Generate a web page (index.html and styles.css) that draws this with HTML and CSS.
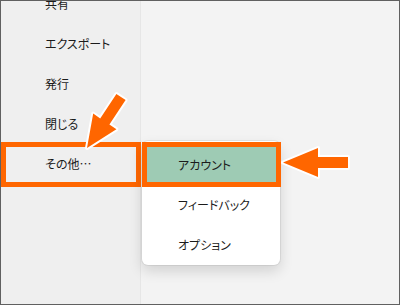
FILE: index.html
```html
<!DOCTYPE html>
<html lang="ja">
<head>
    <meta charset="UTF-8">
    <meta name="viewport" content="width=device-width, initial-scale=1.0">
    <title>その他メニュー</title>
    <link rel="stylesheet" href="styles.css">
</head>
<body>
    <div class="window">
        <div class="sidebar">
            <ul class="nav-list">
                <li class="nav-item">共有</li>
                <li class="nav-item">エクスポート</li>
                <li class="nav-item">発行</li>
                <li class="nav-item">閉じる</li>
                <li class="nav-item marked">その他…</li>
            </ul>
        </div>
        <div class="main"></div>

        <!-- flyout submenu -->
        <ul class="flyout">
            <li class="flyout-item active"><span>アカウント</span></li>
            <li class="flyout-item"><span>フィードバック</span></li>
            <li class="flyout-item"><span>オプション</span></li>
        </ul>

        <!-- callout arrows -->
        <svg class="arrows" width="400" height="305" viewBox="0 0 400 305">
            <polygon points="125.6,100.1 109.4,124.5 116.4,129.2 87,148 93.2,113.6 100.2,118.4 116.4,94" />
            <polygon points="348,157 318,157 318,148 283,162.5 318,177 318,168 348,168" />
        </svg>
    </div>
</body>
</html>
```

FILE: styles.css
```css
* {
    box-sizing: border-box;
}
body {
    margin: 0;
    padding: 0;
    font-family: "Noto Sans CJK JP", "Noto Sans", sans-serif;
    font-size: 12px;
    font-feature-settings: "palt";
    color: #1b1b1b;
}
.window {
    position: relative;
    width: 400px;
    height: 305px;
    border: 1px solid #606060;
    display: flex;
    overflow: hidden;
    background: #f3f3f3;
}
.sidebar {
    width: 140px;
    background: #efefef;
    border-right: 1px solid #e6e6e6;
}
.nav-list {
    list-style: none;
    margin: -17px 0 0 0;
    padding: 0;
}
.nav-item {
    position: relative;
    height: 40px;
    display: flex;
    align-items: center;
    padding-left: 44px;
    padding-bottom: 1px;
}
.nav-item.marked::after {
    content: "";
    position: absolute;
    top: -2px;
    bottom: -3px;
    left: 0;
    right: -1px;
    border: 5px solid #ff6600;
}
.main {
    flex: 1;
}
.flyout {
    position: absolute;
    left: 141px;
    top: 140px;
    width: 138px;
    margin: 0;
    padding: 3px 0 1px 0;
    list-style: none;
    background: #fff;
    border-radius: 6px;
    box-shadow: 0 0 0 1px rgba(0, 0, 0, 0.06), 0 6px 14px rgba(0, 0, 0, 0.14);
}
.flyout-item {
    position: relative;
    height: 40px;
    display: flex;
    align-items: center;
    padding-left: 36px;
}
.flyout-item span {
    position: relative;
}
.flyout-item.active::before {
    content: "";
    position: absolute;
    top: -2px;
    bottom: -3px;
    left: 0;
    right: -1px;
    background: #9ecbb4;
    border: 5px solid #ff6600;
}
.arrows {
    position: absolute;
    left: -1px;
    top: -1px;
    pointer-events: none;
}
.arrows polygon {
    fill: #ff6600;
    stroke: #fff;
    stroke-width: 4;
    stroke-linejoin: round;
    paint-order: stroke fill;
}
```
